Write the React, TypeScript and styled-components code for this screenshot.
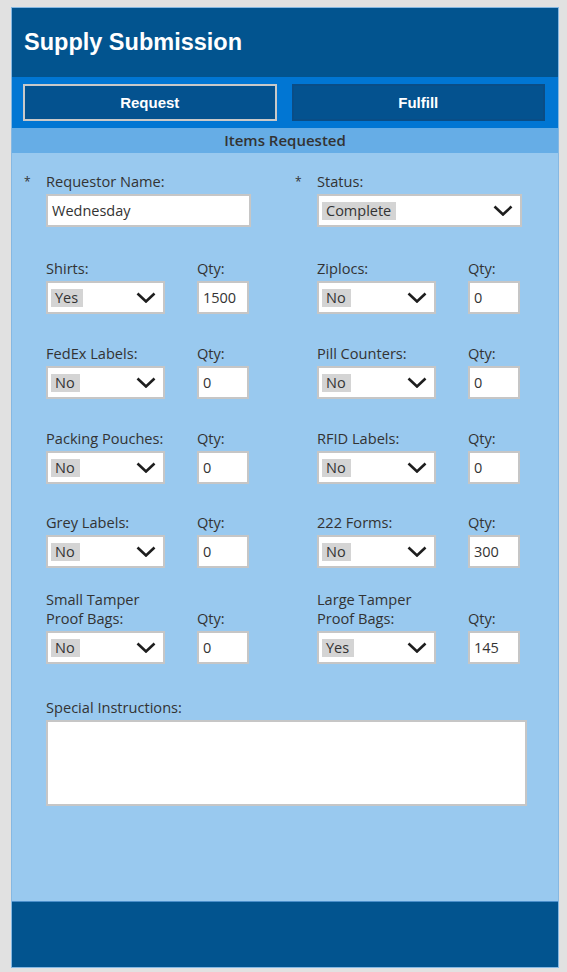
import React from "react";
import styled, { createGlobalStyle } from "styled-components";

const Global = createGlobalStyle`
  html, body { margin: 0; padding: 0; background: #e1e1e1; }
  body { font-family: "Open Sans", "Noto Sans", sans-serif; }
  * { box-sizing: border-box; }
`;

const Page = styled.div`
  padding: 8px 9px 5px 12px;
  background: #e1e1e1;
`;

const Frame = styled.div`
  width: 546px;
  height: 959px;
  display: flex;
  flex-direction: column;
  background: #99c9ef;
  box-shadow: 0 0 0 1px #86b8e2;
`;

const Header = styled.header`
  height: 69px;
  background: #02548f;
  display: flex;
  align-items: center;
  padding-left: 12px;
`;

const Title = styled.h1`
  margin: 0;
  font-family: "Liberation Sans", Arial, sans-serif;
  font-weight: 700;
  font-size: 23.5px;
  color: #fff;
  padding-bottom: 1px;
`;

const Nav = styled.nav`
  height: 51px;
  background: #0176d3;
  display: flex;
  gap: 15px;
  padding: 7px 13px 7px 11px;
`;

const NavButton = styled.button<{ $active?: boolean }>`
  flex: 1;
  height: 37px;
  background: #04528f;
  border: 2px solid ${(p) => (p.$active ? "#c9c9c9" : "#0a4d86")};
  color: #fff;
  font-family: "Liberation Sans", Arial, sans-serif;
  font-weight: 700;
  font-size: 15px;
  padding: 0;
`;

const SectionBar = styled.div`
  height: 25px;
  background: #66ade6;
  color: #333;
  font-size: 15px;
  font-weight: 600;
  display: flex;
  align-items: center;
  justify-content: center;
  padding-bottom: 1px;
`;

const Body = styled.main`
  flex: 1;
  padding: 19px 0 0 34px;
  display: flex;
  flex-direction: column;
`;

const Row = styled.div<{ $top: number }>`
  display: grid;
  grid-template-columns: 205px 205px;
  column-gap: 66px;
  margin-top: ${(p) => p.$top}px;
`;

const Field = styled.div<{ $top?: number }>`
  display: flex;
  flex-direction: column;
  margin-top: ${(p) => p.$top ?? 0}px;
`;

const Pair = styled.div`
  display: grid;
  grid-template-columns: 119px 52px;
  column-gap: 32px;
  align-items: end;
`;

const Label = styled.label`
  display: block;
  color: #333;
  font-size: 14.6px;
  line-height: 19px;
  margin-bottom: 3px;
  position: relative;
  white-space: nowrap;
`;

const Star = styled.span`
  position: absolute;
  left: -22px;
  top: 0;
  color: #333;
  font-size: 12px;
`;

const TextBox = styled.div<{ $w?: number }>`
  height: 33px;
  background: #fff;
  border: 2px solid #c6c6c6;
  display: flex;
  align-items: center;
  padding-left: 4px;
  color: #333;
  font-size: 14.5px;
  ${(p) => (p.$w ? `width: ${p.$w}px;` : "")}
`;

const Select = styled.div`
  height: 33px;
  background: #fff;
  border: 2px solid #c6c6c6;
  display: flex;
  align-items: center;
  justify-content: space-between;
  padding: 0 7px 0 3px;
`;

const Chip = styled.span`
  background: #d4d4d4;
  color: #333;
  font-size: 14.5px;
  line-height: 18px;
  height: 18px;
  padding: 0 5px 0 4px;
`;

const Notes = styled.div`
  width: 481px;
  height: 86px;
  background: #fff;
  border: 2px solid #c6c6c6;
`;

const Footer = styled.footer`
  height: 66px;
  background: #02548f;
  border-top: 1px solid #4b8fcb;
`;

const Chevron = () => (
  <svg width="20" height="11" viewBox="0 0 20 11">
    <polyline
      points="1.5,1.5 10,9.5 18.5,1.5"
      fill="none"
      stroke="#1e1e1e"
      strokeWidth="2.6"
    />
  </svg>
);

const Drop = ({ value }: { value: string }) => (
  <Select>
    <Chip>{value}</Chip>
    <Chevron />
  </Select>
);

type Item = { name: React.ReactNode; value: string; qty: string };

const ItemField = ({ item }: { item: Item }) => (
  <Pair>
    <Label>{item.name}</Label>
    <Label>Qty:</Label>
    <Drop value={item.value} />
    <TextBox>{item.qty}</TextBox>
  </Pair>
);

const rows: { top: number; left: Item; right: Item }[] = [
  {
    top: 32,
    left: { name: "Shirts:", value: "Yes", qty: "1500" },
    right: { name: "Ziplocs:", value: "No", qty: "0" },
  },
  {
    top: 30,
    left: { name: "FedEx Labels:", value: "No", qty: "0" },
    right: { name: "Pill Counters:", value: "No", qty: "0" },
  },
  {
    top: 30,
    left: { name: "Packing Pouches:", value: "No", qty: "0" },
    right: { name: "RFID Labels:", value: "No", qty: "0" },
  },
  {
    top: 29,
    left: { name: "Grey Labels:", value: "No", qty: "0" },
    right: { name: "222 Forms:", value: "No", qty: "300" },
  },
  {
    top: 22,
    left: {
      name: (
        <>
          Small Tamper
          <br />
          Proof Bags:
        </>
      ),
      value: "No",
      qty: "0",
    },
    right: {
      name: (
        <>
          Large Tamper
          <br />
          Proof Bags:
        </>
      ),
      value: "Yes",
      qty: "145",
    },
  },
];

export default function App() {
  return (
    <>
      <Global />
      <Page>
        <Frame>
          <Header>
            <Title>Supply Submission</Title>
          </Header>
          <Nav>
            <NavButton $active>Request</NavButton>
            <NavButton>Fulfill</NavButton>
          </Nav>
          <SectionBar>Items Requested</SectionBar>
          <Body>
            <Row $top={0}>
              <Field>
                <Label>
                  <Star>*</Star>Requestor Name:
                </Label>
                <TextBox $w={205}>Wednesday</TextBox>
              </Field>
              <Field>
                <Label>
                  <Star>*</Star>Status:
                </Label>
                <Drop value="Complete" />
              </Field>
            </Row>
            {rows.map((r, i) => (
              <Row key={i} $top={r.top}>
                <ItemField item={r.left} />
                <ItemField item={r.right} />
              </Row>
            ))}
            <Field $top={34}>
              <Label>Special Instructions:</Label>
              <Notes />
            </Field>
          </Body>
          <Footer />
        </Frame>
      </Page>
    </>
  );
}
